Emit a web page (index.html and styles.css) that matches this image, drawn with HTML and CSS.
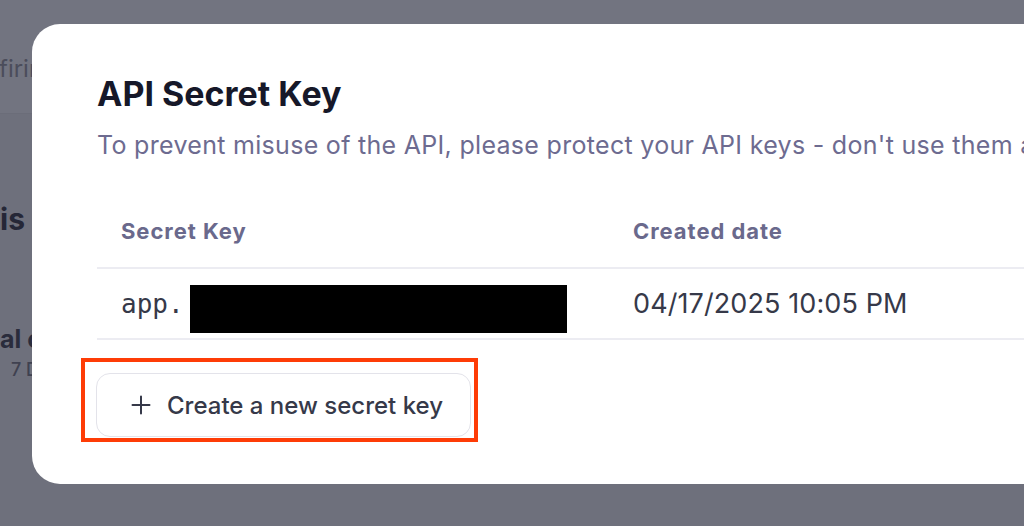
FILE: index.html
```html
<!DOCTYPE html>
<html lang="en">
<head>
<meta charset="utf-8">
<title>API Secret Key</title>
<link rel="stylesheet" href="styles.css">
</head>
<body>
  <div class="page">
    <header class="page-head">
      <span class="crumb">firing</span>
    </header>
    <section class="page-body">
      <h2 class="bg-title">is</h2>
      <div class="bg-card-title">al calls</div>
      <div class="bg-card-sub">7 Days</div>
    </section>
  </div>

  <div class="modal-layer">
    <div class="modal">
      <h1 class="modal-title">API Secret Key</h1>
      <p class="modal-desc">To prevent misuse of the API, please protect your API keys - don't use them anywhere public.</p>

      <div class="keys">
        <div class="keys-row keys-head">
          <div class="cell">Secret Key</div>
          <div class="cell">Created date</div>
        </div>
        <div class="keys-row">
          <div class="cell key"><span class="mono">app.</span><span class="redact"></span></div>
          <div class="cell">04/17/2025 10:05 PM</div>
        </div>
      </div>

      <div class="highlight">
        <button class="new-key" type="button">
          <svg class="plus" viewBox="0 0 20 20" width="20" height="20" aria-hidden="true">
            <path d="M10 1.5v17M1.5 10h17" stroke="currentColor" stroke-width="2" stroke-linecap="round" fill="none"/>
          </svg>
          <span>Create a new secret key</span>
        </button>
      </div>
    </div>
  </div>
</body>
</html>
```

FILE: styles.css
```css
* { box-sizing: border-box; }

html, body {
  margin: 0;
  padding: 0;
  width: 1024px;
  height: 526px;
  overflow: hidden;
}

body {
  background: #6e707c;
  font-family: Inter, "Noto Sans", "Liberation Sans", sans-serif;
  position: relative;
}

/* dimmed page behind the dialog */
.page {
  display: flex;
  flex-direction: column;
}

.page-head {
  height: 114px;
  background: #727480;
  border-bottom: 1px solid #6b6d79;
  padding-top: 53px;
}

.crumb {
  display: block;
  font-size: 24px;
  line-height: 32px;
  color: #4b4d5b;
  margin-left: -1px;
  white-space: nowrap;
}

.page-body {
  display: flex;
  flex-direction: column;
}

.bg-title {
  margin: 87px 0 0 0;
  font-size: 30px;
  line-height: 36px;
  font-weight: 700;
  color: #252737;
  white-space: nowrap;
}

.bg-card-title {
  margin-top: 87px;
  font-size: 25px;
  line-height: 30px;
  font-weight: 700;
  color: #2a2c3c;
  white-space: nowrap;
}

.bg-card-sub {
  margin-top: 5px;
  padding-left: 11px;
  font-size: 18px;
  line-height: 22px;
  font-weight: 500;
  color: #3f4150;
  white-space: nowrap;
}

/* dialog */
.modal-layer {
  position: absolute;
  inset: 0;
}

.modal {
  position: absolute;
  left: 32px;
  top: 24px;
  width: 1120px;
  background: #ffffff;
  border-radius: 28px;
  padding: 50px 65px 42px 65px;
}

.modal-title {
  margin: 0;
  font-size: 34px;
  line-height: 40px;
  font-weight: 700;
  color: #161829;
}

.modal-desc {
  margin: 15px 0 0 0;
  font-size: 25px;
  line-height: 32px;
  color: #6d6b90;
  letter-spacing: 0.3px;
  white-space: nowrap;
}

.keys {
  margin-top: 32px;
  display: flex;
  flex-direction: column;
}

.keys-row {
  display: grid;
  grid-template-columns: 512px 1fr;
  align-items: baseline;
  border-bottom: 2px solid #ececf2;
  padding: 16px 0 5px 0;
}

.keys-head {
  padding: 24px 0 22px 0;
}

.keys-head .cell {
  font-size: 22px;
  line-height: 28px;
  font-weight: 700;
  letter-spacing: 0.95px;
  color: #6a698c;
}

.cell {
  padding: 0 24px;
  font-size: 27px;
  line-height: 32px;
  letter-spacing: 0.1px;
  color: #363949;
  white-space: nowrap;
}

.key {
  display: flex;
  align-items: baseline;
}

.mono {
  font-family: "DejaVu Sans Mono", "Liberation Mono", monospace;
  font-size: 26px;
  letter-spacing: 0;
  padding-top: 3px;
  color: #363949;
}

.redact {
  display: block;
  width: 377px;
  height: 48px;
  margin-left: 6px;
  background: #000000;
  align-self: flex-end;
}

.highlight {
  display: inline-flex;
  margin: 18px 0 0 -16px;
  border: 4px solid #fe3c06;
  padding: 11px 3px 1px 11px;
}

.new-key {
  display: flex;
  align-items: center;
  gap: 16px;
  width: 375px;
  height: 64px;
  padding: 0 0 0 34px;
  background: #ffffff;
  border: 1px solid #e3e3ea;
  border-radius: 14px;
  font-family: inherit;
  font-size: 24px;
  font-weight: 500;
  color: #363949;
}

.plus {
  width: 20px;
  height: 20px;
  color: #363949;
}
```
